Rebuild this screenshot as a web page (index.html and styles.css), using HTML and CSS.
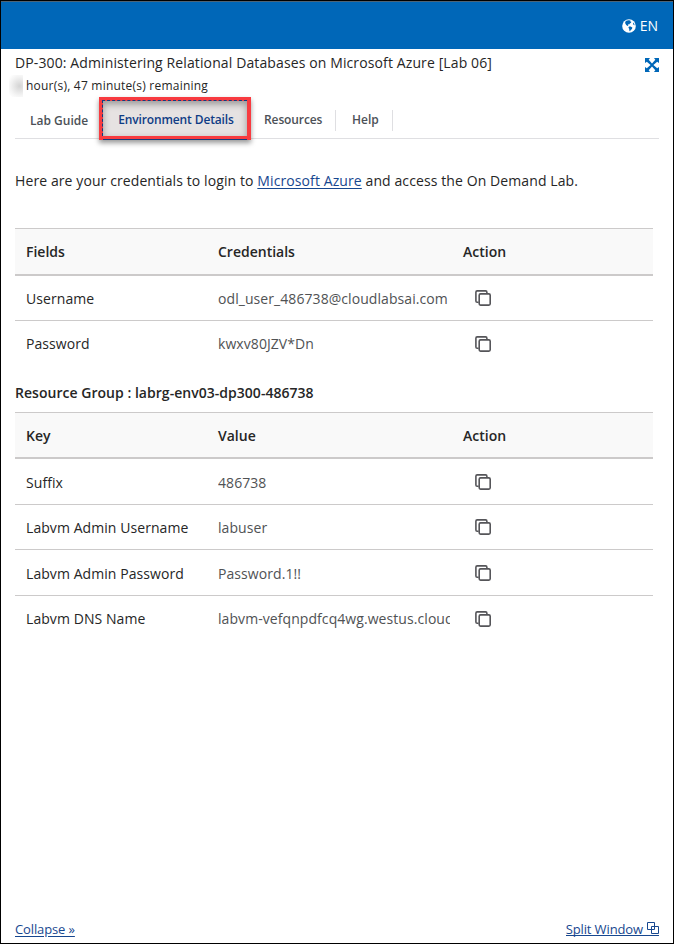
FILE: index.html
```html
<!DOCTYPE html>
<html lang="en">
<head>
<meta charset="utf-8">
<title>Environment Details</title>
<link rel="stylesheet" href="styles.css">
</head>
<body>
<svg class="defs" aria-hidden="true">
  <symbol id="copy" viewBox="0 0 16 16">
    <path d="M3.600 12.200H2.200Q.9 12.200.9 10.900V2.200Q.9.900 2.200.900H10.600Q11.900.900 11.900 2.200V3.500"/>
    <rect x="4.200" y="3.900" width="11" height="11.200" rx="1.300"/>
  </symbol>
</svg>
<div class="window">
  <header class="topbar">
    <svg class="globe" viewBox="0 0 14 14"><circle cx="7" cy="7" r="6.800" fill="#fff"/><path fill="#0067b8" d="M4.200 1.800 6.500 1.200 8.600 1.500 8 2.300 9.300 2.700 9 3.800 7.900 4.500 7.200 5.600 6.400 5.300 5.700 6 6.500 6.900 5.600 7 4.200 5.900 3.200 4.300 3.200 3ZM7 7.400 8.600 7.500 10.300 8.600 10 9.900 8.700 11 8 12.400 7.300 11.600 7.200 9.900 6.400 8.600ZM11.200 3.400 12.200 4.700 12.600 6.300 11.700 5.900 11 4.700Z"/></svg>
    <span class="lang">EN</span>
  </header>
  <main class="content">
    <div class="heading">
      <h1 class="title">DP-300: Administering Relational Databases on Microsoft Azure [Lab 06]</h1>
      <svg class="expand" viewBox="0 0 14 14"><path fill="#0067b8" d="M0 0H5L3.700 1.700 7 5.600 10.300 1.700 9 0H14V5L12.200 3.700 8.400 7 12.200 10.300 14 9V14H9L10.300 12.300 7 8.400 3.700 12.300 5 14H0V9L1.800 10.300 5.600 7 1.800 3.700 0 5Z"/></svg>
    </div>
    <div class="remaining"><span class="smudge"></span><span class="time">hour(s), 47 minute(s) remaining</span></div>
    <nav class="tabs">
      <a class="tab guide">Lab Guide</a>
      <a class="tab active"><span>Environment Details</span></a>
      <a class="tab resources">Resources</a>
      <a class="tab help">Help</a>
    </nav>
    <p class="intro">Here are your credentials to login to <a>Microsoft Azure</a> and access the On Demand Lab.</p>
    <section class="table">
      <div class="row head"><span>Fields</span><span>Credentials</span><span>Action</span></div>
      <div class="row"><span>Username</span><span class="value">odl_user_486738@cloudlabsai.com</span><svg class="copy"><use href="#copy"/></svg></div>
      <div class="row"><span>Password</span><span class="value">kwxv80JZV*Dn</span><svg class="copy"><use href="#copy"/></svg></div>
    </section>
    <h2 class="group">Resource Group : labrg-env03-dp300-486738</h2>
    <section class="table">
      <div class="row head second"><span>Key</span><span>Value</span><span>Action</span></div>
      <div class="row tall"><span>Suffix</span><span class="value">486738</span><svg class="copy"><use href="#copy"/></svg></div>
      <div class="row"><span>Labvm Admin Username</span><span class="value">labuser</span><svg class="copy"><use href="#copy"/></svg></div>
      <div class="row tall"><span>Labvm Admin Password</span><span class="value">Password.1!!</span><svg class="copy"><use href="#copy"/></svg></div>
      <div class="row"><span>Labvm DNS Name</span><span class="value">labvm-vefqnpdfcq4wg.westus.cloudapp.azure.com</span><svg class="copy"><use href="#copy"/></svg></div>
    </section>
  </main>
  <footer class="footer">
    <a class="collapse">Collapse »</a>
    <a class="split">Split Window <svg class="spliticon" viewBox="0 0 12 12"><path d="M.5.500H7.500V7.500H.5ZM4.500 4.500H11.500V11.500H4.500Z"/></svg></a>
  </footer>
</div>
</body>
</html>
```
FILE: styles.css
```css
* { box-sizing: border-box; }
body { margin: 0; font-family: "Open Sans", "Noto Sans", sans-serif; color: #262626; background: #fff; }
.defs { position: absolute; width: 0; height: 0; }
.window { width: 674px; height: 944px; border: 1px solid #000; display: flex; flex-direction: column; overflow: hidden; }
.topbar { height: 48px; flex: none; background: #0067b8; border-top: 1px solid #4c6478; color: #fff; display: flex; align-items: center; justify-content: flex-end; gap: 4px; padding-right: 15px; }
.globe { width: 14px; height: 14px; }
.lang { font-size: 14px; line-height: 20px; }
.content { flex: 1; padding: 0 14px; }
.heading { display: flex; justify-content: space-between; height: 26px; padding-top: 4px; }
.title { margin: 0; font-size: 14px; line-height: 20px; font-weight: 400; white-space: nowrap; letter-spacing: .115px; }
.expand { width: 14px; height: 14px; margin-top: 5px; }
.remaining { display: flex; align-items: center; height: 21px; margin-left: -6px; font-size: 12px; letter-spacing: .22px; }
.smudge { width: 14px; height: 22px; margin-right: 3px; background: radial-gradient(ellipse at 75% 50%, #d4d4d4, #f3f3f3 60%, #fff 90%); }
.tabs { display: flex; align-items: center; height: 43px; padding-top: 6px; border-bottom: 1px solid #dfdfe2; font-size: 12px; font-weight: 600; color: #4c5157; white-space: nowrap; }
.guide { width: 84px; padding-left: 15px; }
.active { position: relative; z-index: 1; flex: none; width: 152px; height: 43px; margin: -4px 13px 0 0; border: 4px solid #f83b40; background: #e6e2e2; color: #0f3c85; box-shadow: 0 3px 5px rgba(0,0,0,.4), inset 0 3px 7px rgba(0,0,0,.34); display: flex; align-items: center; justify-content: center; letter-spacing: -.13px; padding: 2px 0 0 2px; }
.active::before { content: ""; position: absolute; inset: -1px 0 0 -1px; border-top: 1px dashed #123b7d; border-left: 1px dashed #123b7d; }
.active::after { content: ""; position: absolute; left: 0; right: 0; bottom: -4px; height: 1px; background: #123b7d; }
.resources { width: 72px; height: 21px; line-height: 19px; border-right: 1px solid #dfdfe2; letter-spacing: -.1px; }
.help { width: 57px; height: 21px; line-height: 19px; padding-left: 16px; border-right: 1px solid #dfdfe2; }
.intro { margin: 32px 0 0; height: 57px; font-size: 14px; line-height: 20px; white-space: nowrap; letter-spacing: .097px; }
.intro a, .footer a { color: #17478f; text-decoration: underline; text-underline-offset: 2px; }
.table { width: 638px; border-top: 1px solid #cccaca; font-size: 14px; letter-spacing: .07px; }
.row { display: grid; grid-template-columns: 192px 245px 1fr; align-items: center; height: 45px; padding-left: 11px; border-bottom: 1px solid #cccaca; white-space: nowrap; }
.row.tall { height: 46px; padding-top: 1px; }
.row:last-child { border-bottom: 0; }
.row.head { height: 47px; font-weight: 600; background: #f9f9f9; border-bottom: 2px solid #cccaca; letter-spacing: 0; }
.row.second { height: 46px; }
.value { width: 232px; overflow: hidden; color: #505254; }
.copy { width: 16px; height: 16px; margin-left: 12px; fill: none; stroke: #555559; stroke-width: 1.6; }
.group { margin: 17px 0 9px; font-size: 14px; line-height: 20px; font-weight: 600; letter-spacing: .03px; }
.footer { display: flex; justify-content: space-between; height: 25px; padding: 0 14px; font-size: 13px; line-height: 22px; letter-spacing: -.12px; }
.footer .split { display: flex; gap: 4px; height: 18px; border-bottom: 1px solid #17478f; text-decoration: none; }
.spliticon { width: 12px; height: 12px; margin-top: 4px; fill: none; stroke: #17478f; stroke-width: 1; }
```
